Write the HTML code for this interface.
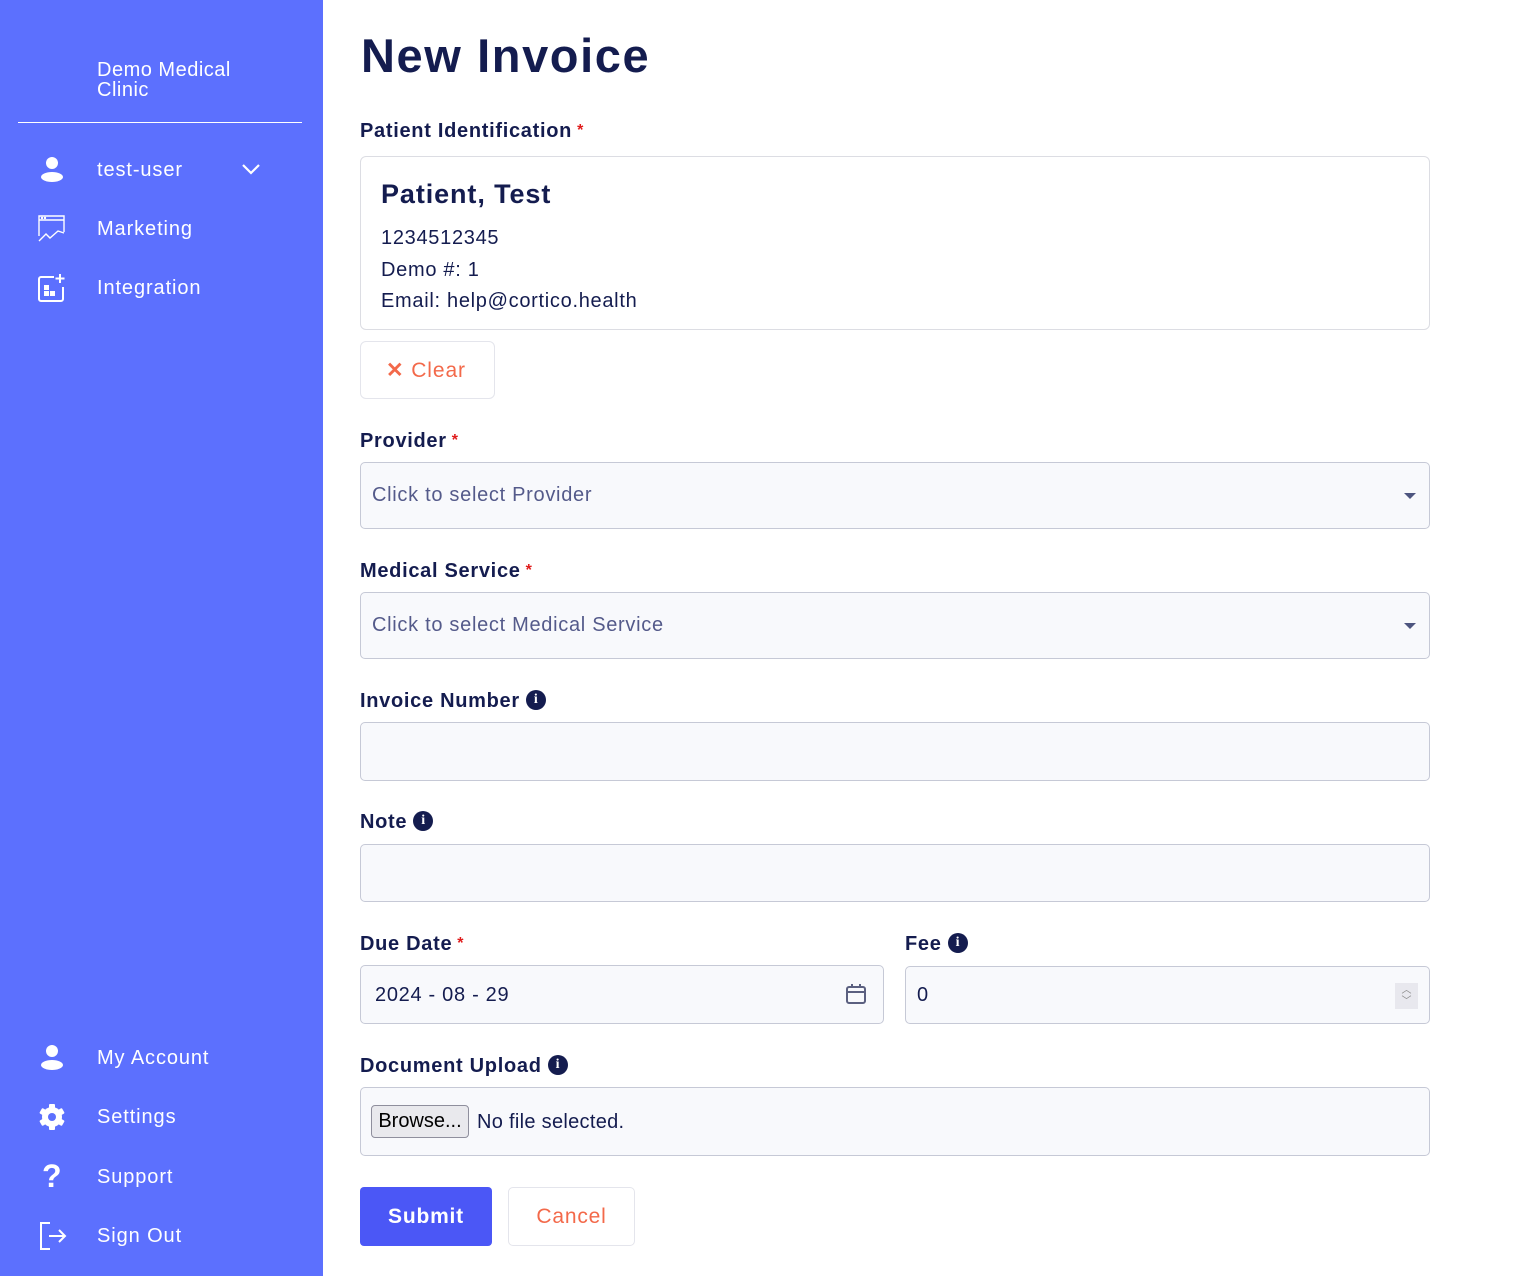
<!DOCTYPE html>
<html><head><meta charset="utf-8"><style>
*{margin:0;padding:0;box-sizing:border-box}
body{width:1518px;height:1276px;position:relative;background:#fff;font-family:"Liberation Sans",sans-serif;overflow:hidden;color:#141c4f;letter-spacing:.6px}
.sb{position:absolute;left:0;top:0;width:323px;height:1276px;background:#5c70fe}
.a{position:absolute}
.nav{position:absolute;left:97px;color:#fff;font-size:20px;line-height:24px;letter-spacing:.9px}
.ic{position:absolute;left:38px}
.lbl{position:absolute;left:360px;font-size:20px;font-weight:bold;color:#141c4f;line-height:24px;letter-spacing:.7px}
.req{color:#e01b1b;font-size:16px;vertical-align:top;margin-left:5px}
.inp{position:absolute;background:#f8f9fc;border:1px solid #c6c9d6;border-radius:5px}
.ph{position:absolute;left:11px;font-size:20px;color:#545a8a;letter-spacing:.7px}
.info{display:inline-block;width:20px;height:20px;border-radius:50%;background:#141c4f;color:#fff;font-size:14px;font-weight:bold;text-align:center;line-height:20px;position:relative;top:-2px;vertical-align:middle;margin-left:6px;font-family:"Liberation Serif",serif;letter-spacing:0}
.caret{position:absolute;right:13px;width:0;height:0;border-left:6px solid transparent;border-right:6px solid transparent;border-top:6px solid #4e557f}
</style></head><body>
<div class="sb">
  <div class="nav" style="top:60px;font-size:20px;line-height:20px;letter-spacing:.5px">Demo Medical<br>Clinic</div>
  <div class="a" style="left:18px;top:122px;width:284px;height:1px;background:#fff"></div>

  <svg class="ic" style="top:155px" width="28" height="28" viewBox="0 0 28 28"><circle cx="14" cy="8" r="6" fill="#fff"/><ellipse cx="14" cy="22" rx="11" ry="5" fill="#fff"/></svg>
  <div class="nav" style="top:158px">test-user</div>
  <svg class="a" style="left:241px;top:162px" width="20" height="14" viewBox="0 0 20 14"><path d="M2 3l8 8 8-8" stroke="#fff" stroke-width="2.2" fill="none"/></svg>

  <svg class="ic" style="top:214px" width="28" height="28" viewBox="0 0 28 28" fill="none" stroke="#fff" stroke-width="1.4"><path d="M1 22V2h25v16M1 6h25"/><path d="M1 27l7-7 4 4 8-7 6 2"/><circle cx="4" cy="4" r=".5" fill="#fff"/><circle cx="7" cy="4" r=".5" fill="#fff"/></svg>
  <div class="nav" style="top:217px">Marketing</div>

  <svg class="ic" style="top:273px" width="28" height="30" viewBox="0 0 28 30" fill="none" stroke="#fff" stroke-width="2"><path d="M16 4H3a2 2 0 0 0-2 2v20a2 2 0 0 0 2 2h20a2 2 0 0 0 2-2V14M22 1v9M17.5 5.5h9"/><rect x="7" y="13" width="3" height="3" fill="#fff"/><rect x="7" y="19" width="3" height="3" fill="#fff"/><rect x="13" y="19" width="3" height="3" fill="#fff"/></svg>
  <div class="nav" style="top:276px">Integration</div>

  <svg class="ic" style="top:1043px" width="28" height="28" viewBox="0 0 28 28"><circle cx="14" cy="8" r="6" fill="#fff"/><ellipse cx="14" cy="22" rx="11" ry="5" fill="#fff"/></svg>
  <div class="nav" style="top:1046px">My Account</div>

  <svg class="ic" style="top:1103px" width="28" height="28" viewBox="0 0 28 28"><g fill="#fff"><circle cx="14" cy="14" r="10"/><g><rect x="11" y="1" width="6" height="26" rx="1"/><rect x="11" y="1" width="6" height="26" rx="1" transform="rotate(60 14 14)"/><rect x="11" y="1" width="6" height="26" rx="1" transform="rotate(120 14 14)"/></g></g><circle cx="14" cy="14" r="4" fill="#5c70fe"/></svg>
  <div class="nav" style="top:1105px">Settings</div>

  <div class="a" style="left:42px;top:1159px;color:#fff;font-size:32px;font-weight:bold;line-height:34px">?</div>
  <div class="nav" style="top:1165px">Support</div>

  <svg class="ic" style="top:1221px" width="30" height="30" viewBox="0 0 30 30" fill="none" stroke="#fff" stroke-width="2"><path d="M12 2H3v26h9M11 15h16M21 9l6 6-6 6"/></svg>
  <div class="nav" style="top:1224px">Sign Out</div>
</div>

<div class="a" style="left:361px;top:26px;font-size:47px;font-weight:bold;color:#141c4f;line-height:60px;letter-spacing:1.6px">New Invoice</div>

<div class="lbl" style="top:119px">Patient Identification<span class="req">*</span></div>
<div class="a" style="left:360px;top:156px;width:1070px;height:174px;border:1px solid #dcdde3;border-radius:6px">
  <div class="a" style="left:20px;top:22px;font-size:27px;font-weight:bold;color:#141c4f;letter-spacing:.9px">Patient, Test</div>
  <div class="a" style="left:20px;top:66px;font-size:20px;line-height:31.5px;color:#141c4f;letter-spacing:.7px">1234512345<br>Demo #: 1<br>Email: help@cortico.health</div>
</div>
<div class="a" style="left:360px;top:341px;width:135px;height:58px;border:1px solid #e4e5ec;border-radius:6px">
  <div class="a" style="left:25px;top:16px;font-size:21px;color:#f3694a;letter-spacing:.9px"><b>✕</b>&nbsp;Clear</div>
</div>

<div class="lbl" style="top:429px">Provider<span class="req">*</span></div>
<div class="inp" style="left:360px;top:462px;width:1070px;height:67px"><div class="ph" style="top:21px">Click to select Provider</div><div class="caret" style="top:30px"></div></div>

<div class="lbl" style="top:559px">Medical Service<span class="req">*</span></div>
<div class="inp" style="left:360px;top:592px;width:1070px;height:67px"><div class="ph" style="top:21px">Click to select Medical Service</div><div class="caret" style="top:30px"></div></div>

<div class="lbl" style="top:689px">Invoice Number<span class="info">i</span></div>
<div class="inp" style="left:360px;top:722px;width:1070px;height:59px"></div>

<div class="lbl" style="top:810px">Note<span class="info">i</span></div>
<div class="inp" style="left:360px;top:844px;width:1070px;height:58px"></div>

<div class="lbl" style="top:932px">Due Date<span class="req">*</span></div>
<div class="inp" style="left:360px;top:965px;width:524px;height:59px">
  <div class="a" style="left:14px;top:18px;font-size:20px;color:#141c4f;letter-spacing:.7px">2024 - 08 - 29</div>
  <svg class="a" style="left:484px;top:17px" width="22" height="22" viewBox="0 0 22 22" fill="none" stroke="#5b6080" stroke-width="2"><rect x="2" y="4" width="18" height="16" rx="2"/><path d="M2 9h18M7 1v4M15 1v4" /></svg>
</div>
<div class="lbl" style="left:905px;top:932px">Fee<span class="info">i</span></div>
<div class="inp" style="left:905px;top:966px;width:525px;height:58px">
  <div class="a" style="left:11px;top:17px;font-size:20px;color:#141c4f">0</div>
  <div class="a" style="left:489px;top:16px;width:23px;height:26px;background:#e8e8ee;color:#888;font-size:10px;text-align:center;line-height:11px;padding-top:2px;letter-spacing:0">︿<br>﹀</div>
</div>

<div class="lbl" style="top:1054px">Document Upload<span class="info">i</span></div>
<div class="inp" style="left:360px;top:1087px;width:1070px;height:69px">
  <div class="a" style="left:10px;top:17px;width:98px;height:33px;background:#e9e9ed;border:1px solid #8f8f9d;border-radius:4px;font-size:20px;color:#000;text-align:center;line-height:31px;letter-spacing:0">Browse...</div>
  <div class="a" style="left:116px;top:23px;font-size:20px;color:#141c4f;letter-spacing:.3px">No file selected.</div>
</div>

<div class="a" style="left:360px;top:1187px;width:132px;height:59px;background:#4b57f6;border-radius:4px;color:#fff;font-size:21px;font-weight:bold;text-align:center;line-height:59px;letter-spacing:.8px">Submit</div>
<div class="a" style="left:508px;top:1187px;width:127px;height:59px;border:1px solid #e4e5ec;border-radius:5px;color:#f3694a;font-size:21px;text-align:center;line-height:57px;letter-spacing:.8px">Cancel</div>
</body></html>
